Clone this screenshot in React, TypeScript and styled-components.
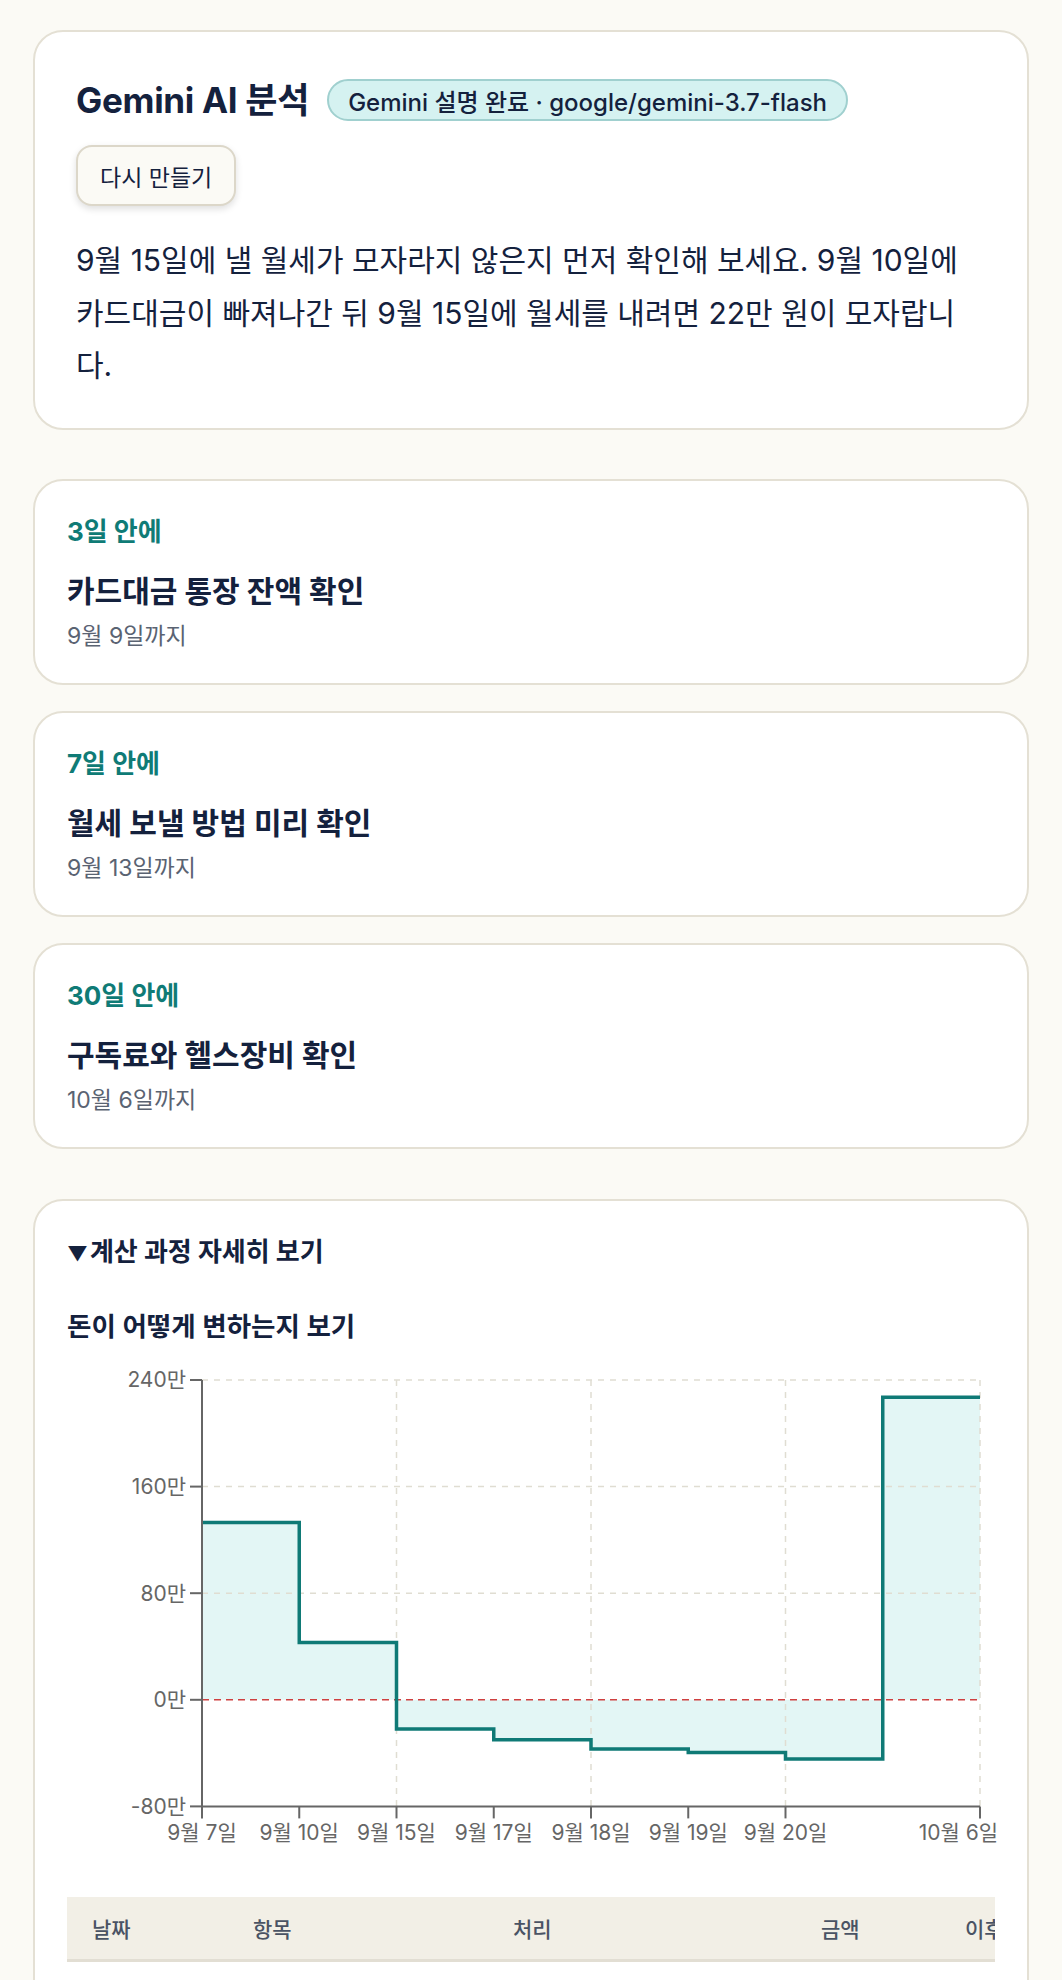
import * as React from 'react';
import styled, { createGlobalStyle } from 'styled-components';

const GlobalStyle = createGlobalStyle`
  html, body {
    margin: 0;
    padding: 0;
    background: #fbfaf5;
  }
  body {
    font-family: "Inter", "Noto Sans CJK KR", sans-serif;
    color: #14213d;
  }
  * {
    box-sizing: border-box;
  }
`;

const Page = styled.div`
  display: flex;
  flex-direction: column;
  padding: 30px 33px 60px;
`;

const Card = styled.section`
  background: #fff;
  border: 2px solid #e4e0d4;
  border-radius: 30px;
`;

const SummaryCard = styled(Card)`
  padding: 45px 41px 36px;
`;

const Header = styled.div`
  display: flex;
  align-items: center;
  gap: 18px;
`;

const Title = styled.h1`
  margin: 0;
  font-size: 35px;
  font-weight: 700;
  line-height: 46px;
  letter-spacing: -0.3px;
`;

const Badge = styled.span`
  display: inline-flex;
  align-items: center;
  height: 42px;
  padding: 0 19px;
  border-radius: 21px;
  background: #d5f2f1;
  border: 2px solid #a0d0cf;
  font-size: 24px;
  font-weight: 500;
`;

const RetryButton = styled.button`
  margin-top: 22px;
  height: 61px;
  padding: 0 22px;
  font-family: inherit;
  font-size: 23px;
  color: #14213d;
  background: #fbfaf5;
  border: 2px solid #dcd7c9;
  border-radius: 16px;
  box-shadow: 0 3px 7px rgba(0, 0, 0, 0.13);
`;

const Explain = styled.p`
  margin: 28px 0 0;
  font-size: 30px;
  line-height: 52.5px;
`;

const ActionList = styled.div`
  display: flex;
  flex-direction: column;
  gap: 26px;
  margin-top: 49px;
`;

const ActionCard = styled(Card)`
  height: 206px;
  padding: 33px 32px 0;
`;

const Due = styled.div`
  font-size: 26px;
  font-weight: 700;
  line-height: 36px;
  color: #0f7b76;
`;

const ActionTitle = styled.div`
  margin-top: 20px;
  font-size: 30px;
  font-weight: 700;
  line-height: 42px;
`;

const ActionDate = styled.div`
  margin-top: 9px;
  font-size: 23px;
  line-height: 30px;
  color: #5a6372;
`;

const DetailCard = styled(Card)`
  margin-top: 50px;
  padding: 33px 32px 40px;
`;

const Summary = styled.div`
  font-size: 26px;
  font-weight: 700;
  line-height: 36px;
`;

const Arrow = styled.span`
  font-size: 20px;
  margin-right: 2px;
`;

const ChartTitle = styled.h3`
  margin: 36px 0 0;
  font-size: 26.5px;
  font-weight: 600;
  line-height: 36px;
`;

const ChartBox = styled.div`
  margin-top: 16px;
  height: 500px;
  svg {
    display: block;
    overflow: visible;
  }
`;

const TableScroll = styled.div`
  margin-top: 37px;
  overflow: hidden;
`;

const Table = styled.table`
  width: 1073px;
  table-layout: fixed;
  border-collapse: collapse;
  font-size: 21px;
`;

const Th = styled.th<{ $w: number }>`
  width: ${(p) => p.$w}px;
  height: 64px;
  padding: 0 25px;
  text-align: left;
  font-weight: 500;
  color: #4a5364;
  background: #f2efe6;
  border-bottom: 3px solid #e2ded3;
  white-space: nowrap;
`;

const Td = styled.td`
  height: 64px;
  padding: 0 25px;
  color: #14213d;
  border-bottom: 1px solid #ece9df;
  white-space: nowrap;
`;

const actions = [
  { due: '3일 안에', title: '카드대금 통장 잔액 확인', date: '9월 9일까지' },
  { due: '7일 안에', title: '월세 보낼 방법 미리 확인', date: '9월 13일까지' },
  { due: '30일 안에', title: '구독료와 헬스장비 확인', date: '10월 6일까지' },
];

const X0 = 135;
const DX = 97.25;
const yOf = (v: number) => 20 + (240 - v) * (106.6 / 80);
const values = [133, 43, -22, -30, -37, -39.5, -44.5, 227, 227];
const xLabels: (string | null)[] = [
  '9월 7일',
  '9월 10일',
  '9월 15일',
  '9월 17일',
  '9월 18일',
  '9월 19일',
  '9월 20일',
  null,
  '10월 6일',
];
const yTicks = [240, 160, 80, 0, -80];

function BalanceChart() {
  const xs = values.map((_, i) => X0 + i * DX);
  const xEnd = xs[xs.length - 1];
  let steps = '';
  for (let i = 1; i < values.length; i++) {
    steps += ` H${xs[i]} V${yOf(values[i])}`;
  }
  const line = `M${xs[0]},${yOf(values[0])}${steps}`;
  const area = `M${xs[0]},${yOf(0)} V${yOf(values[0])}${steps} V${yOf(0)} Z`;
  const axisY = yOf(-80);
  const last = xLabels.length - 1;

  return (
    <svg width="928" height="500" viewBox="0 0 928 500">
      <path d={area} fill="#e3f6f5" />
      {[240, 160, 80].map((v) => (
        <line key={v} x1={X0} x2={xEnd} y1={yOf(v)} y2={yOf(v)} stroke="#e0ddd2" strokeWidth="1.5" strokeDasharray="6 6" />
      ))}
      {[2, 4, 6, 8].map((i) => (
        <line key={i} x1={xs[i]} x2={xs[i]} y1={yOf(240)} y2={axisY} stroke="#e0ddd2" strokeWidth="1.5" strokeDasharray="6 6" />
      ))}
      <line x1={X0} x2={xEnd} y1={yOf(0)} y2={yOf(0)} stroke="#cf4040" strokeWidth="1.5" strokeDasharray="7 5" />
      <path d={line} fill="none" stroke="#0f7a76" strokeWidth="3.5" />
      <line x1={X0} x2={X0} y1={yOf(240)} y2={axisY} stroke="#666" strokeWidth="2" />
      <line x1={X0} x2={xEnd} y1={axisY} y2={axisY} stroke="#666" strokeWidth="2" />
      {yTicks.map((v) => (
        <g key={v}>
          <line x1={X0 - 12} x2={X0} y1={yOf(v)} y2={yOf(v)} stroke="#666" strokeWidth="2" />
          <text x={X0 - 16} y={yOf(v)} dy="0.35em" textAnchor="end" fontSize="21" fill="#666">
            {v}만
          </text>
        </g>
      ))}
      {xLabels.map((label, i) =>
        label ? (
          <g key={i}>
            <line x1={xs[i]} x2={xs[i]} y1={axisY} y2={axisY + 12} stroke="#666" strokeWidth="2" />
            <text
              x={i === last ? xs[i] + 18 : xs[i]}
              y={axisY + 26}
              dy="0.35em"
              textAnchor={i === last ? 'end' : 'middle'}
              fontSize="21"
              fill="#666"
            >
              {label}
            </text>
          </g>
        ) : null,
      )}
    </svg>
  );
}

const rows = [
  ['9월 7일', '현재 잔액', '시작', '1,330,000원', '1,330,000원'],
  ['9월 10일', '카드대금', '자동 출금', '-900,000원', '430,000원'],
  ['9월 15일', '월세', '이체', '-650,000원', '-220,000원'],
  ['9월 17일', '통신비', '자동 출금', '-80,000원', '-300,000원'],
];

export default function App() {
  return (
    <>
      <GlobalStyle />
      <Page>
        <SummaryCard>
          <Header>
            <Title>Gemini AI 분석</Title>
            <Badge>Gemini 설명 완료 · google/gemini-3.7-flash</Badge>
          </Header>
          <RetryButton type="button">다시 만들기</RetryButton>
          <Explain>
            9월 15일에 낼 월세가 모자라지 않은지 먼저 확인해 보세요. 9월 10일에 카드대금이 빠져나간 뒤 9월 15일에
            월세를 내려면 22만 원이 모자랍니다.
          </Explain>
        </SummaryCard>

        <ActionList>
          {actions.map((a) => (
            <ActionCard key={a.title}>
              <Due>{a.due}</Due>
              <ActionTitle>{a.title}</ActionTitle>
              <ActionDate>{a.date}</ActionDate>
            </ActionCard>
          ))}
        </ActionList>

        <DetailCard>
          <Summary>
            <Arrow>▼</Arrow>계산 과정 자세히 보기
          </Summary>
          <ChartTitle>돈이 어떻게 변하는지 보기</ChartTitle>
          <ChartBox>
            <BalanceChart />
          </ChartBox>
          <TableScroll>
            <Table>
              <thead>
                <tr>
                  <Th $w={161}>날짜</Th>
                  <Th $w={260}>항목</Th>
                  <Th $w={308}>처리</Th>
                  <Th $w={144}>금액</Th>
                  <Th $w={200}>이후 잔액</Th>
                </tr>
              </thead>
              <tbody>
                {rows.map((r) => (
                  <tr key={r[0]}>
                    {r.map((c, i) => (
                      <Td key={i}>{c}</Td>
                    ))}
                  </tr>
                ))}
              </tbody>
            </Table>
          </TableScroll>
        </DetailCard>
      </Page>
    </>
  );
}
